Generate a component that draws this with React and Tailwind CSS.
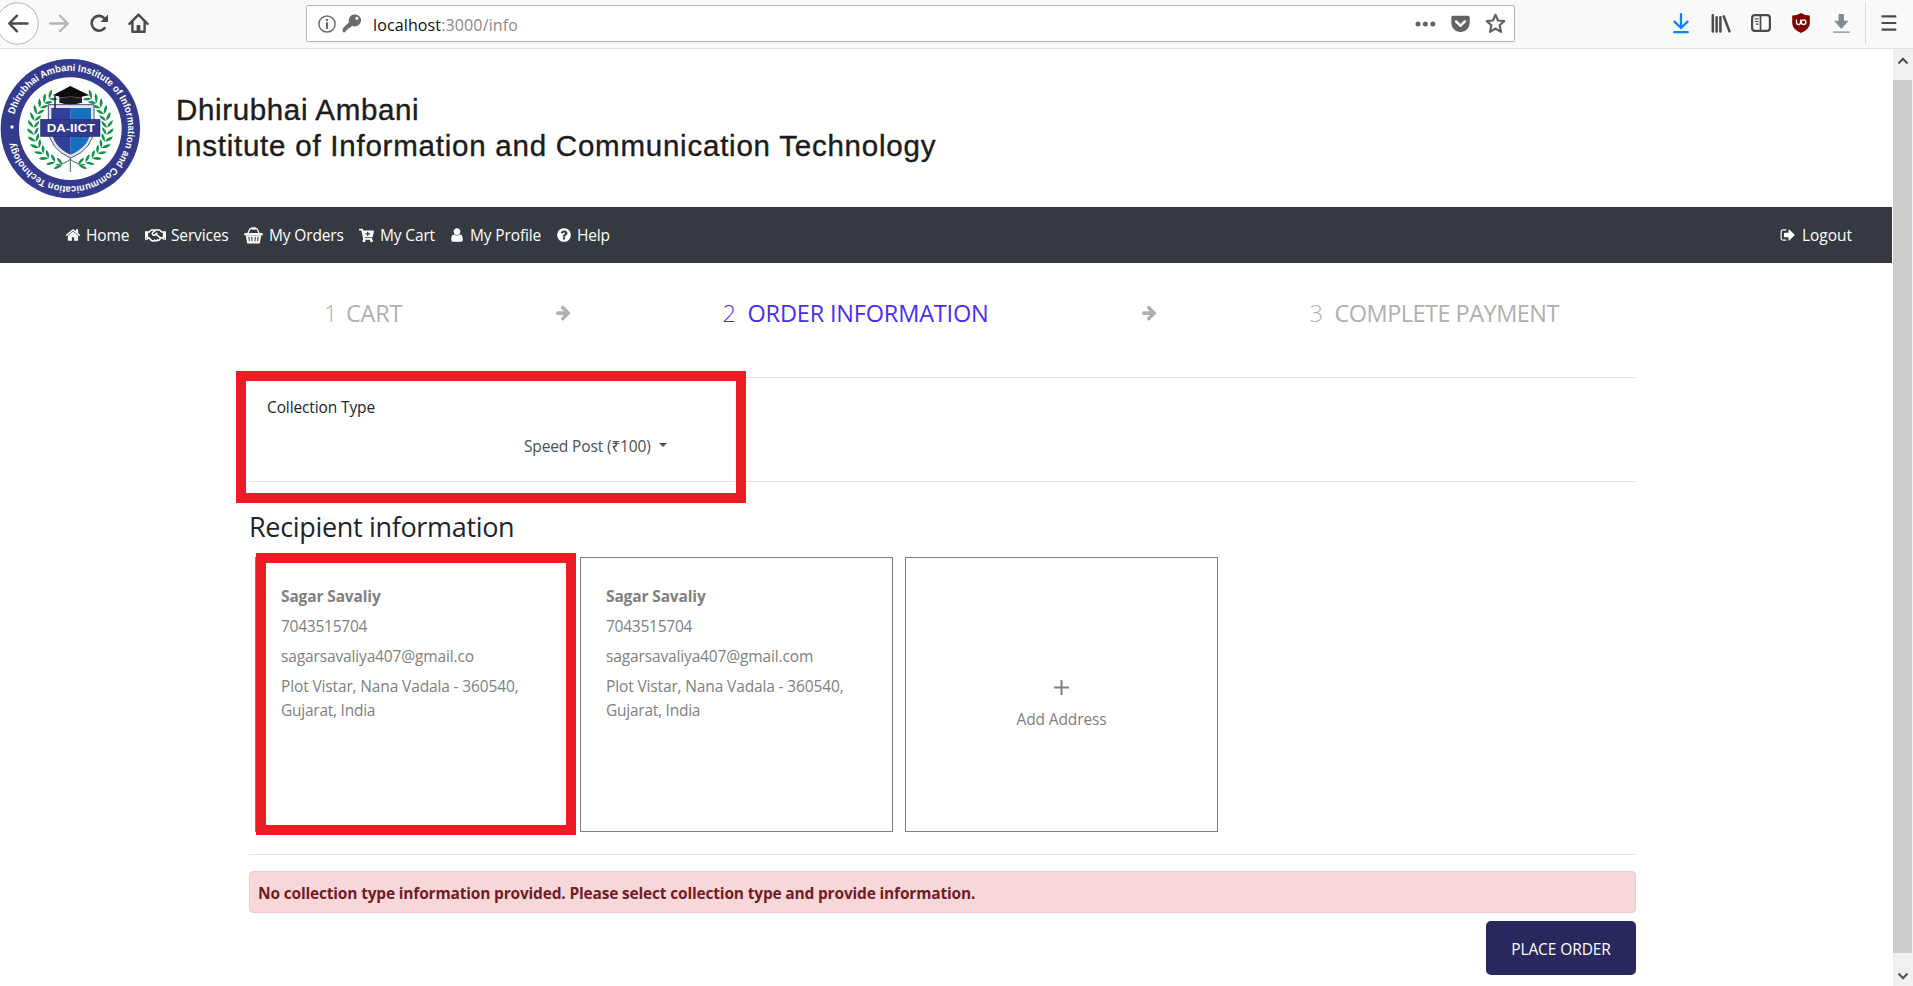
import React from "react";
import { FaRegHandshake, FaCartPlus, FaGetPocket } from "react-icons/fa";

function Fa({ d, size = 16 }) {
  return (
    <svg width={size} height={size} viewBox="0 0 1792 1792" fill="currentColor">
      <path d={d} />
    </svg>
  );
}

const HOME =
  "M1472 992v480q0 26-19 45t-45 19h-384v-384h-256v384h-384q-26 0-45-19t-19-45v-480q0-1 .5-3t.5-3l575-474 575 474q1 2 1 6zm223-69l-62 74q-8 9-21 11h-3q-13 0-21-7l-692-577-692 577q-12 8-24 7-13-2-21-11l-62-74q-8-10-7-23.5t11-21.5l719-599q32-26 76-26t76 26l244 204v-195q0-14 9-23t23-9h192q14 0 23 9t9 23v408l219 182q10 8 11 21.5t-7 23.5z";
const ARROW =
  "M1600 960q0 54-37 91l-651 651q-39 37-91 37-51 0-90-37l-75-75q-38-38-38-91t38-91l293-293h-704q-52 0-84.5-37.5t-32.5-90.5v-128q0-53 32.5-90.5t84.5-37.5h704l-293-294q-38-36-38-90t38-90l75-75q38-38 90-38 53 0 91 38l651 651q37 35 37 90z";
const USER =
  "M1536 1399q0 109-62.5 187t-150.5 78h-854q-88 0-150.5-78t-62.5-187q0-85 8.5-160.5t31.5-152 58.5-131 94-89 134.5-34.5q131 128 313 128t313-128q76 0 134.5 34.5t94 89 58.5 131 31.5 152 8.5 160.5zm-256-887q0 159-112.5 271.5t-271.5 112.5-271.5-112.5-112.5-271.5 112.5-271.5 271.5-112.5 271.5 112.5 112.5 271.5z";
const QUESTION =
  "M1024 1376v-192q0-14-9-23t-23-9h-192q-14 0-23 9t-9 23v192q0 14 9 23t23 9h192q14 0 23-9t9-23zm256-672q0-88-55.5-163t-138.5-116-170-41q-243 0-371 213-15 24 8 42l132 100q7 6 19 6 16 0 25-12 53-68 86-92 34-24 86-24 48 0 85.5 26t37.5 59q0 38-20 61t-68 45q-63 28-115.5 86.5t-52.5 125.5v36q0 14 9 23t23 9h192q14 0 23-9t9-23q0-19 21.5-49.5t54.5-49.5q32-18 49-28.5t46-35 44.5-48 28-60.5 12.5-81zm384 192q0 209-103 385.5t-279.5 279.5-385.5 103-385.5-103-279.5-279.5-103-385.5 103-385.5 279.5-279.5 385.5-103 385.5 103 279.5 279.5 103 385.5z";
const SIGN_OUT =
  "M704 1440q0 4 1 20t.5 26.5-3 23.5-10 19.5-20.5 6.5h-320q-119 0-203.5-84.5t-84.5-203.5v-704q0-119 84.5-203.5t203.5-84.5h320q13 0 22.5 9.5t9.5 22.5q0 4 1 20t.5 26.5-3 23.5-10 19.5-20.5 6.5h-320q-66 0-113 47t-47 113v704q0 66 47 113t113 47h312l11.5 1 11.5 3 8 5.5 7 9 2 13.5zm928-544q0 26-19 45l-544 544q-19 19-45 19t-45-19-19-45v-288h-448q-26 0-45-19t-19-45v-384q0-26 19-45t45-19h448v-288q0-26 19-45t45-19 45 19l544 544q19 19 19 45z";

function Basket() {
  return (
    <svg width="19" height="17" viewBox="0 0 19 17" fill="none">
      <path d="M3.4 7.5 5.6 2.4Q5.9 1.6 6.8 1.6H12.2Q13.1 1.6 13.4 2.4L15.6 7.5" stroke="currentColor" strokeWidth="1.3" />
      <rect x="6.8" y="0.3" width="5.4" height="2.3" rx="0.8" fill="currentColor" />
      <rect x="0.2" y="6" width="18.6" height="2.6" rx="1.2" fill="currentColor" />
      <path
        fillRule="evenodd"
        fill="currentColor"
        d="M1.8 8.4H17.2L16 15.4Q15.8 16.6 14.6 16.6H4.4Q3.2 16.6 3 15.4ZM4.3 9.8 4.9 14.2H5.9L5.4 9.8ZM7.2 9.8 7.5 14.2H8.5L8.3 9.8ZM10.7 9.8 10.5 14.2H11.5L11.8 9.8ZM13.6 9.8 13.1 14.2H14.1L14.7 9.8Z"
      />
    </svg>
  );
}

function Toolbar() {
  return (
    <div className="flex h-[49px] shrink-0 items-start border-b border-[#e0e0e1] bg-[#f9f9fa] text-[#4a4a4b]">
      <svg className="mt-[2px] shrink-0" width="39" height="43" viewBox="0 0 39 43" fill="none">
        <circle cx="17.5" cy="21.5" r="20.7" fill="#fff" stroke="#b3b3b3" strokeWidth="1" />
        <path d="M27.5 21.5H9.5M17 13.7 9.2 21.5 17 29.3" stroke="#4a4a4b" strokeWidth="2.4" strokeLinecap="round" strokeLinejoin="round" />
      </svg>
      <svg className="mt-[14px] ml-[10px] shrink-0" width="20" height="19" viewBox="0 0 20 19" fill="none" stroke="#b4b4b5" strokeWidth="2.3" strokeLinecap="round" strokeLinejoin="round">
        <path d="M1.2 9.5H18.6M11 1.7 18.8 9.5 11 17.3" />
      </svg>
      <svg className="mt-[13px] ml-[20px] shrink-0" width="20" height="20" viewBox="0 0 20 20" fill="none" stroke="#4a4a4b">
        <path d="M15.6 15.2A7.4 7.4 0 1 1 15.8 5.6" strokeWidth="2.6" strokeLinecap="round" />
        <path d="M19 1.5V9H11.5Z" fill="#4a4a4b" stroke="none" />
      </svg>
      <svg className="mt-[13px] ml-[19px] shrink-0" width="21" height="21" viewBox="0 0 21 21" fill="none" stroke="#4a4a4b" strokeWidth="2.4" strokeLinecap="round" strokeLinejoin="round">
        <path d="M1.5 10.8 10.5 1.6 19.5 10.8" />
        <path d="M4.4 9.5V18.7H16.6V9.5" />
        <path d="M10.5 12V18.5" strokeWidth="3.8" strokeLinecap="butt" />
      </svg>
      <div className="mt-[5px] ml-[157px] flex h-[37px] w-[1209px] shrink-0 items-center rounded-[2px] border border-[#b9b9ba] bg-white pl-[11px] shadow-[0_1px_3px_rgba(0,0,0,0.06)]">
        <svg className="shrink-0" width="18" height="18" viewBox="0 0 18 18" fill="none">
          <circle cx="9" cy="9" r="8.1" stroke="#6a6a6b" strokeWidth="1.5" />
          <path d="M9 8V13.2" stroke="#6a6a6b" strokeWidth="2.1" strokeLinecap="round" />
          <circle cx="9" cy="5.1" r="1.25" fill="#6a6a6b" />
        </svg>
        <svg className="ml-[6px] shrink-0" width="19" height="19" viewBox="0 0 19 19" fill="#6a6a6b">
          <path d="M12.7.4A6 6 0 0 0 7 8.2L.7 14.5V17.4Q.7 18.3 1.6 18.3H3.6V16.3H5.6V14.2H7.3L10.2 11.7A6 6 0 1 0 12.7.4ZM14.9 2.7A1.6 1.6 0 1 1 14.8 5.9 1.6 1.6 0 0 1 14.9 2.7Z" fillRule="evenodd" />
        </svg>
        <span className="ml-[12px] grow pt-[2px] text-[16px] leading-6 tracking-[0.13px] text-[#8a8a8b]">
          <span className="text-[#0c0c0d]">localhost</span>:3000/info
        </span>
        <svg className="mr-[14px] shrink-0" width="22" height="6" viewBox="0 0 22 6" fill="#636364">
          <circle cx="4" cy="3" r="2.5" />
          <circle cx="11.4" cy="3" r="2.5" />
          <circle cx="18.8" cy="3" r="2.5" />
        </svg>
        <FaGetPocket className="mr-[14px] shrink-0 text-[#636364]" size={21} />
        <svg className="mr-[8px] shrink-0" width="21" height="21" viewBox="0 0 21 21" fill="none" stroke="#636364" strokeWidth="2.2" strokeLinejoin="round">
          <path d="M10.5 1.8 13.1 7.5 19.2 8.1 14.6 12.3 16 18.9 10.5 15.5 5 18.9 6.4 12.3 1.8 8.1 7.9 7.5Z" />
        </svg>
      </div>
      <svg className="mt-[13px] ml-[158px] shrink-0" width="16" height="21" viewBox="0 0 16 21" fill="none" stroke="#0a84ff" strokeWidth="2.3" strokeLinecap="round" strokeLinejoin="round">
        <path d="M8 1.2V14.5M1.5 8.6 8 15 14.5 8.6M1.3 19.2H14.7" />
      </svg>
      <svg className="mt-[14px] ml-[22px] shrink-0" width="20" height="19" viewBox="0 0 20 19" fill="none" stroke="#4a4a4b" strokeWidth="2.5" strokeLinecap="round">
        <path d="M1.8 1.3V17.6M5.6 3.3V17.6M9.4 3.3V17.6M12.7 2.3 18.5 17.4" />
      </svg>
      <svg className="mt-[14px] ml-[20px] shrink-0" width="20" height="18" viewBox="0 0 20 18" fill="none" stroke="#4a4a4b">
        <rect x="1.1" y="1.1" width="17.8" height="15.8" rx="2.8" strokeWidth="2.2" />
        <path d="M9.5 1V17" strokeWidth="1.7" />
        <path d="M3.8 4.8H7.6M3.8 7.5H7.6M4.8 10.2H7.6" strokeWidth="1.2" />
      </svg>
      <svg className="mt-[13px] ml-[21px] shrink-0" width="18" height="20" viewBox="0 0 18 20" fill="none">
        <path d="M9 0Q13 2.5 17.8 2.6V10Q17.8 16 9 20 .2 16 .2 10V2.6Q5 2.5 9 0Z" fill="#800000" />
        <path d="M4.5 6.5V9.2Q4.5 11.6 6.5 11.6T8.6 9.2V6.5" stroke="#fff" strokeWidth="1.4" />
        <circle cx="11.6" cy="9.2" r="2.3" stroke="#fff" strokeWidth="1.4" />
      </svg>
      <svg className="mt-[14px] ml-[23px] shrink-0" width="17" height="19" viewBox="0 0 17 19" fill="#7d8e90">
        <path d="M5.6 0H10.9V6.8H15.5L8.3 15 1.2 6.8H5.6ZM.2 17.4H16.8V18.8H.2Z" />
      </svg>
      <div className="mt-[2px] ml-[15px] h-[42px] w-px bg-[#dadadb]" />
      <svg className="mt-[15px] ml-[15px] shrink-0" width="16" height="16" viewBox="0 0 16 16" fill="none" stroke="#4a4a4b" strokeWidth="2.2" strokeLinecap="round">
        <path d="M1.4 1.4H14.4M1.4 8H14.4M1.4 14.6H14.4" />
      </svg>
    </div>
  );
}

const LEAF_ANGLES = [74, 62, 50, 39, 28, 17, 6, -5, -16, -27, -38, -48, -58];

function Wreath() {
  return LEAF_ANGLES.map((a) => {
    const t = (a * Math.PI) / 180;
    const x = 111 * Math.cos(t);
    const y = 111 * Math.sin(t);
    return (
      <g key={a} transform={`translate(${x} ${y}) rotate(${a})`}>
        <path d="M-1 7Q3-9 18-15 18 0 -1 7ZM-1 7Q-3-9-16-15-17 0 -1 7Z" fill="#129447" />
      </g>
    );
  });
}

function Crest() {
  return (
    <svg className="shrink-0" width="142" height="142" viewBox="0 38 426 426">
      <defs>
        <path id="ring" d="M43.4 207.3A173 173 0 1 1 40.2 277.1" />
      </defs>
      <circle cx="211" cy="250" r="209" fill="#343b8f" />
      <circle cx="211" cy="250" r="154" fill="#fff" />
      <text fill="#fff" fontFamily="'Liberation Sans', sans-serif" fontWeight="700" fontSize="30" textLength="1002" lengthAdjust="spacingAndGlyphs">
        <textPath href="#ring" textLength="1002" lengthAdjust="spacingAndGlyphs">
          Dhirubhai Ambani Institute of Information and Communication Technology
        </textPath>
      </text>
      <circle cx="36" cy="245" r="5" fill="#fff" />
      <g transform="translate(211 250)">
        <Wreath />
        <g transform="scale(-1 1)">
          <Wreath />
        </g>
        <path d="M0 88V130M-44 108Q-15 106 0 92 15 106 44 108" stroke="#3d6e4e" strokeWidth="3" fill="none" />
      </g>
      <path d="M145 178H282V250Q278 312 212 338 149 312 145 250Z" fill="#e4e6ee" stroke="#4a4f86" strokeWidth="3" />
      <path d="M154 188H212V328Q157 304 154 250Z" fill="#33409b" />
      <path d="M212 188H273V250Q270 304 212 328Z" fill="#1671c2" />
      <rect x="122" y="222" width="178" height="51" fill="#30398c" stroke="#252c70" strokeWidth="2" />
      <text x="140" y="259" fill="#fff" fontFamily="'Liberation Sans', sans-serif" fontWeight="700" fontSize="32" textLength="145" lengthAdjust="spacingAndGlyphs">
        DA-IICT
      </text>
      <path d="M178 148V172Q211 182 246 172V148Z" fill="#1a1a1a" />
      <path d="M158 150 211 122 268 150 211 160Z" fill="#0d0d0d" />
      <path d="M180 158Q211 150 244 158" stroke="#777" strokeWidth="2" fill="none" />
      <path d="M165 152V190" stroke="#0d0d0d" strokeWidth="4" />
    </svg>
  );
}

function Header() {
  return (
    <header className="flex h-[158px] shrink-0 pt-[9px]">
      <Crest />
      <div className="pt-[34px] pl-[34px] font-['Liberation_Sans',sans-serif] text-[29.5px] leading-[36px] whitespace-nowrap text-[#1c1c1c]">
        <div className="tracking-[0.65px] [-webkit-text-stroke:0.4px_#1c1c1c]">Dhirubhai Ambani</div>
        <div className="tracking-[0.77px] [-webkit-text-stroke:0.4px_#1c1c1c]">Institute of Information and Communication Technology</div>
      </div>
    </header>
  );
}

const NAV = [
  { label: "Home", cell: "w-[80px]", slot: "w-[21px]", icon: <Fa d={HOME} /> },
  { label: "Services", cell: "w-[99px]", slot: "w-[26px]", icon: <FaRegHandshake size={21} /> },
  { label: "My Orders", cell: "w-[115px]", slot: "w-[25px]", icon: <Basket /> },
  { label: "My Cart", cell: "w-[92px]", slot: "w-[21px]", icon: <FaCartPlus size={15} /> },
  { label: "My Profile", cell: "w-[105px]", slot: "w-[19px]", icon: <span className="-ml-[2px]"><Fa d={USER} /></span> },
  { label: "Help", cell: "w-[80px]", slot: "w-[21px]", icon: <Fa d={QUESTION} /> },
];

function Nav() {
  return (
    <nav className="mr-px flex h-[56px] shrink-0 items-center bg-[#343a40] pl-[65px] tracking-[-0.14px] text-white">
      {NAV.map((n) => (
        <a key={n.label} className={`flex items-center whitespace-nowrap ${n.cell}`}>
          <span className={`flex shrink-0 ${n.slot}`}>{n.icon}</span>
          <span>{n.label}</span>
        </a>
      ))}
      <a className="mr-[40px] ml-auto flex items-center">
        <span className="flex w-[22px]">
          <Fa d={SIGN_OUT} />
        </span>
        <span className="tracking-[-0.02px]">Logout</span>
      </a>
    </nav>
  );
}

function Steps() {
  return (
    <div className="flex h-[36px] items-center text-[23.5px] leading-[36px] whitespace-nowrap text-[#b0b0b0]">
      <div className="flex w-[306px] pl-[75px]">
        <span className="w-[22px] font-light">1</span>
        <span className="tracking-[-0.2px]">CART</span>
      </div>
      <div className="w-[167.5px] pb-[2px]">
        <Fa d={ARROW} size={17} />
      </div>
      <div className="flex w-[418.5px] text-[#4a2df5]">
        <span className="w-[25px] font-light">2</span>
        <span className="tracking-[-0.18px]">ORDER INFORMATION</span>
      </div>
      <div className="w-[168.5px] pb-[2px]">
        <Fa d={ARROW} size={17} />
      </div>
      <div className="flex">
        <span className="w-[25px] font-light">3</span>
        <span className="tracking-[-0.52px]">COMPLETE PAYMENT</span>
      </div>
    </div>
  );
}

function AddressCard({ email, marked }) {
  return (
    <div className="relative h-[275px] w-[313px] border border-[#808080] px-[25px] pt-[26px] tracking-[-0.14px] text-[#808080]">
      <div className="mb-[6px] font-bold">Sagar Savaliy</div>
      <div className="mb-[6px] tracking-[-0.25px]">7043515704</div>
      <div className="mb-[6px]">{email}</div>
      <div className="whitespace-nowrap">
        Plot Vistar, Nana Vadala - 360540,
        <br />
        <span className="tracking-[-0.25px]">Gujarat, India</span>
      </div>
      {marked && <div className="absolute -top-[5px] left-0 h-[282px] w-[320px] border-[10px] border-[#ed1c24]" />}
    </div>
  );
}

function Scrollbar() {
  return (
    <div className="flex w-[20px] shrink-0 flex-col bg-[#f0f0f0]">
      <div className="flex h-[31px] shrink-0 justify-center pt-[7px]">
        <svg width="12" height="9" viewBox="0 0 12 9" fill="none" stroke="#505050" strokeWidth="2">
          <path d="M1.5 7.5 6 2.8 10.5 7.5" />
        </svg>
      </div>
      <div className="mr-px h-[873px] shrink-0 bg-[#cdcdcd]" />
      <div className="flex grow justify-center pt-[19px]">
        <svg width="12" height="9" viewBox="0 0 12 9" fill="none" stroke="#505050" strokeWidth="2">
          <path d="M1.5 1.5 6 6.2 10.5 1.5" />
        </svg>
      </div>
    </div>
  );
}

function Rule({ className }) {
  return <div className={`h-px bg-[#e4e4e4] ${className}`} />;
}

export default function App() {
  return (
    <div className="flex h-[986px] w-[1913px] flex-col overflow-hidden bg-white font-['Open_Sans','Noto_Sans',sans-serif] text-[15.5px] leading-6 text-[#212529]">
      <Toolbar />
      <div className="flex min-h-0 grow">
        <div className="flex min-w-0 grow flex-col">
          <Header />
          <Nav />
          <main className="relative ml-[249px] w-[1387px] pt-[32px]">
            <Steps />
            <Rule className="mt-[46px]" />
            <div className="mt-[17px] pl-[18px] tracking-[-0.12px]">Collection Type</div>
            <div className="mt-[15px] flex pl-[275px] tracking-[-0.14px] text-[#495057]">
              <span>Speed Post (₹100)</span>
              <span className="mt-[9px] ml-[8px] h-0 w-0 border-x-[4px] border-t-[4px] border-x-transparent border-t-[#495057]" />
            </div>
            <Rule className="mt-[23px]" />
            <h2 className="mt-[28px] text-[27px] leading-[34px] tracking-[-0.33px]">Recipient information</h2>
            <div className="mt-[13px] ml-[6px] flex gap-[12px]">
              <AddressCard email="sagarsavaliya407@gmail.co" marked />
              <AddressCard email="sagarsavaliya407@gmail.com" />
              <div className="flex h-[275px] w-[313px] flex-col items-center border border-[#808080] pt-[122px] text-[#808080]">
                <svg width="15" height="15" viewBox="0 0 15 15" stroke="#808080" strokeWidth="2">
                  <path d="M0 7.5H15M7.5 0V15" />
                </svg>
                <div className="mt-[12px] tracking-[-0.12px]">Add Address</div>
              </div>
            </div>
            <Rule className="mt-[22px]" />
            <div className="mt-[16px] h-[42px] rounded-[4px] border border-[#f5c6cb] bg-[#f8d7da] pt-[9px] pl-[8px] font-bold tracking-[-0.18px] text-[#721c24]">
              No collection type information provided. Please select collection type and provide information.
            </div>
            <button className="mt-[8px] ml-auto flex h-[54px] w-[150px] items-center justify-center rounded-[5px] bg-[#28285f] pt-[2px] tracking-[-0.1px] text-white">
              PLACE ORDER
            </button>
            <div className="absolute top-[108px] -left-[13px] h-[132px] w-[510px] border-[10px] border-[#ed1c24]" />
          </main>
        </div>
        <Scrollbar />
      </div>
    </div>
  );
}
